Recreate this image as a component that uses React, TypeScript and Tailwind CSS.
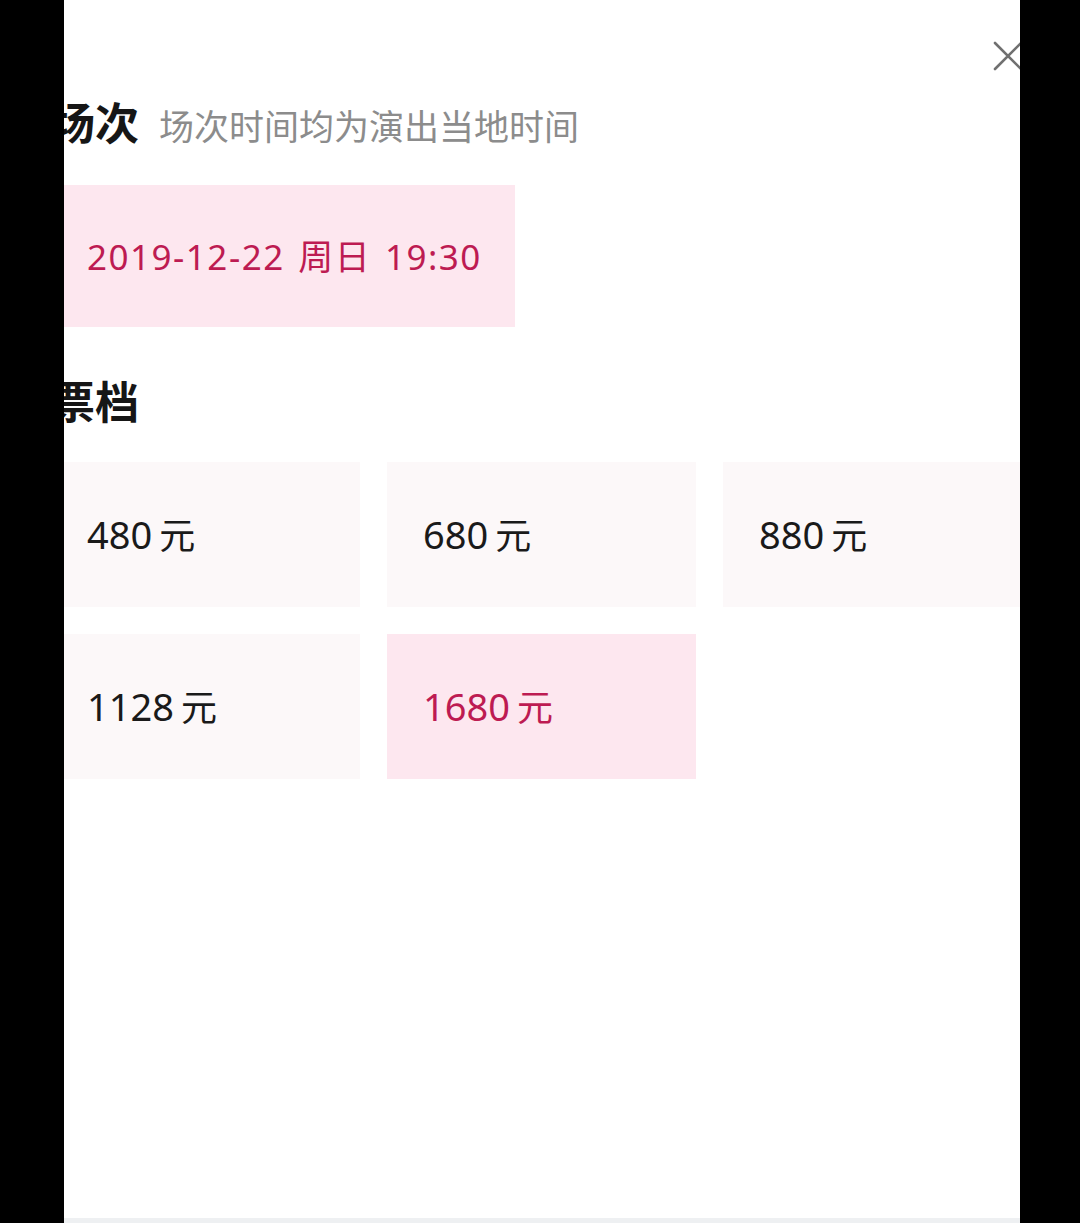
import React from "react";

const prices: { num: string; active?: boolean }[] = [
  { num: "480" },
  { num: "680" },
  { num: "880" },
  { num: "1128" },
  { num: "1680", active: true },
];

const font = { fontFamily: '"Noto Sans", "Noto Sans CJK SC", sans-serif' };

export default function App() {
  return (
    <div className="flex h-[1223px] w-[1080px] bg-black" style={font}>
      <div className="w-[64px] shrink-0" />
      <div className="relative flex h-[1223px] w-[956px] shrink-0 flex-col overflow-hidden bg-white">
        <button className="absolute left-[928px] top-[40px] h-[32px] w-[32px]" aria-label="关闭">
          <svg viewBox="0 0 32 32" className="h-[32px] w-[32px]" fill="none" stroke="#707070" strokeWidth="2.6" strokeLinecap="round">
            <path d="M3 3 L29 29 M29 3 L3 29" />
          </svg>
        </button>

        <div className="ml-[-13px] flex w-[1000px] flex-col pt-[101px]">
          <div className="flex items-baseline gap-[20px]">
            <span className="text-[44px] font-bold leading-none text-[#161616]">场次</span>
            <span className="text-[35px] leading-none text-[#8c8c8c]">场次时间均为演出当地时间</span>
          </div>

          <div className="mt-[40px] flex h-[142px] w-[464px] items-center bg-[#fde7ef] pl-[36px]">
            <span className="text-[35px] leading-none tracking-[1.5px] text-[#bd1b52] [word-spacing:3px]">2019-12-22 周日 19:30</span>
          </div>

          <div className="mt-[53px] text-[44px] font-bold leading-none text-[#161616]">票档</div>

          <div className="mt-[38px] grid grid-cols-[309px_309px_309px] gap-x-[27px] gap-y-[27px]">
            {prices.map((p) => (
              <div
                key={p.num}
                className={
                  p.active
                    ? "flex h-[145px] items-center bg-[#fde7ef] pl-[36px]"
                    : "flex h-[145px] items-center bg-[#fcf8f9] pl-[36px]"
                }
              >
                <span
                  className={
                    p.active
                      ? "text-[38px] leading-none text-[#bd1b52]"
                      : "text-[38px] leading-none text-[#1a1a1a]"
                  }
                >
                  {p.num}
                  <span className="ml-[7px] text-[36px]">元</span>
                </span>
              </div>
            ))}
          </div>
        </div>

        <div className="mt-auto h-[5px] bg-[#eef0f2]" />
      </div>
      <div className="flex-1" />
    </div>
  );
}
